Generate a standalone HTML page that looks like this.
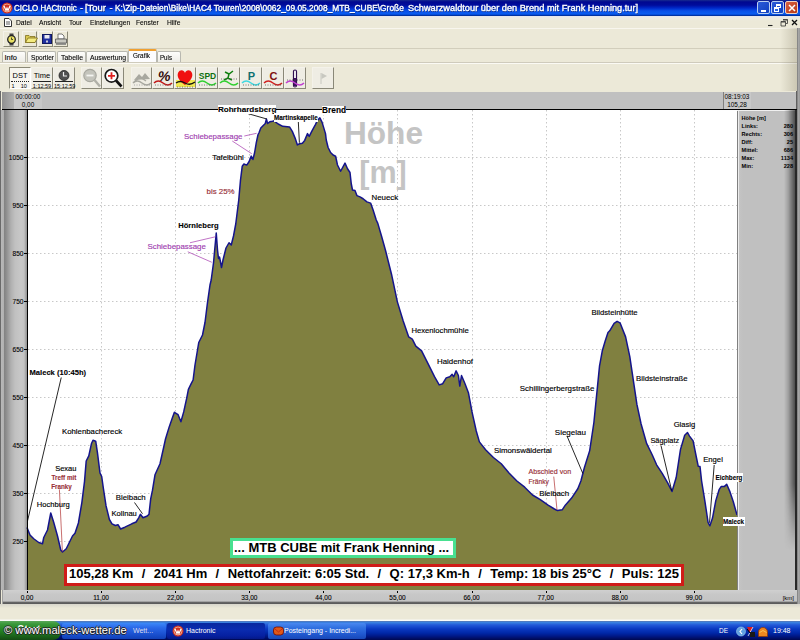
<!DOCTYPE html>
<html><head><meta charset="utf-8">
<style>
*{margin:0;padding:0;box-sizing:border-box}
html,body{width:800px;height:640px;overflow:hidden;background:#ece9d8;font-family:"Liberation Sans",sans-serif;}
.a{position:absolute}
#title{left:0;top:0;width:800px;height:16px;background:linear-gradient(#182c90 0%,#000890 12%,#000c9c 32%,#0028c8 50%,#0850e8 68%,#0a5cf0 88%,#0040c8 93%,#002888 100%);}
#title .t{top:2.7px;color:#fff;font-size:8.8px;white-space:nowrap;line-height:10px;transform-origin:0 0;-webkit-text-stroke:0.35px #fff;text-shadow:0.5px 0.5px 0 #0a1a60}
#menu{left:0;top:16px;width:800px;height:12px;background:linear-gradient(#e4e4ee,#ecebe4 15%,#ece9d8 40%,#ece9d8);font-size:7px;color:#000}
#menu span{position:absolute;top:1.5px;line-height:9px;font-size:7.8px;transform:scaleX(0.86);transform-origin:0 0;-webkit-text-stroke:0.1px #000}
#tb1{left:0;top:28px;width:800px;height:20px;background:#ece9d8;border-top:1px solid #f8f6ee}
.btn{position:absolute;border-right:1px solid #8a8876;border-bottom:1px solid #8a8876;border-left:1px solid #f4f2ea;border-top:1px solid #f4f2ea}
#tabs{left:0;top:48px;width:800px;height:15px;background:#ece9d8}
.tt{position:absolute;font-size:7.5px;line-height:9px;white-space:nowrap;transform-origin:0 0;-webkit-text-stroke:0.1px #000}
.tab{position:absolute;top:3px;height:12px;background:linear-gradient(#fdfdfb,#ecebe5);border:1px solid #b8b8b0;border-bottom:none;font-size:7.2px;text-align:center;line-height:11px;color:#000;border-radius:2px 2px 0 0}
#tb2{left:0;top:63px;width:800px;height:28px;background:#ece9d8;border-top:1px solid #fbfaf4}
#hdr{left:2px;top:92px;width:795px;height:17px;background:linear-gradient(90deg,#909090 0%,#b0b0b0 1.5%,#c0c0c0 3%,#c0c0c0 100%)}
#blk{left:2px;top:109px;width:795px;height:1px;background:#000}
#leftp{left:0px;top:110px;width:27px;height:480px;background:linear-gradient(90deg,#585858 0px,#606060 1px,#b8b8b8 1px,#b0b0b0 4px,#848484 4.5px,#8c8c8c 6px,#b0b0b0 11px,#c0c0c0 15px,#c8c8c8 21px,#c4c4c4 24px,#a0a0a0 26px,#909090 27px)}
#axis{left:26.5px;top:110px;width:1.2px;height:480px;background:#000}
#chart{left:0;top:0;width:800px;height:640px}
.yl{position:absolute;left:2px;width:21.5px;text-align:right;font-size:6.6px;color:#000;line-height:8px;-webkit-text-stroke:0.1px #000}
.ytick{position:absolute;left:24px;width:3px;height:1.3px;background:#000}
#rp{left:737px;top:110px;width:60px;height:480px;background:linear-gradient(90deg,#808080 0px,#808080 1px,#f0f0f0 1px,#e8e8e8 2px,#c4c4c4 2px,#c0c0c0 6px,#c0c0c0 100%);border-top:1px solid #f0f0f0}
#rpsh{left:784px;top:110px;width:11px;height:440px;background:linear-gradient(90deg,rgba(0,0,0,0),rgba(0,0,0,0.15) 35%,rgba(0,0,0,0.6));-webkit-mask-image:linear-gradient(#000 85%,rgba(0,0,0,0))}
#rpt{left:737px;top:110px;width:60px;height:100px}
#rpt div{position:absolute;font-size:5.6px;font-weight:bold;line-height:8px;color:#000;white-space:nowrap}
#xax{left:2px;top:590px;width:795px;height:14px;background:linear-gradient(#d0d0d0,#c8c8c8 30%,#c4c4c4 80%,#686868 86%,#585858 100%);border-left:1px solid #a0a0a0}
.xl{position:absolute;top:594px;width:40px;text-align:center;font-size:6.5px;color:#000;line-height:8px;-webkit-text-stroke:0.1px #000}
.xtick{position:absolute;top:591px;width:1px;height:2px;background:#000}
#beige{left:0;top:604px;width:800px;height:17px;background:linear-gradient(#d8d6cc,#ece9d8 25%,#ece9d8 88%,#f8f8f4 94%,#fff)}
#task{left:0;top:621px;width:800px;height:19px;background:linear-gradient(#5a78b0 0px,#3a80e0 1.5px,#2258d8 4px,#0a38c0 8px,#0028a8 12px,#001888 15px,#000850 19px)}
.lbl{position:absolute;font-size:7.8px;color:#000;white-space:nowrap;line-height:9px;-webkit-text-stroke:0.15px currentColor}
.bd{font-weight:bold;-webkit-text-stroke:0.1px currentColor}
.mag{color:#a040b0}
.red{color:#983038}
.wb{background:#fff}
</style></head><body>
<div id="title" class="a">
<svg class="a" style="left:1px;top:2px" width="12" height="12"><circle cx="6" cy="6" r="5.5" fill="#d03020"/><circle cx="6" cy="6" r="4" fill="none" stroke="#f0c0a0" stroke-width="0.8"/><path d="M3 4 L5 8.5 L6 6 L7 8.5 L9 4" stroke="#fff" stroke-width="1.2" fill="none"/></svg>
<div class="t a" style="left:13.8px;transform:scaleX(0.902)">CICLO HACtronic</div><div class="t a" style="left:80px">-</div><div class="t a" style="left:85px;transform:scaleX(1.074)">[Tour</div><div class="t a" style="left:109.5px">-</div><div class="t a" style="left:115px;transform:scaleX(0.95)">K:\Zip-Dateien\Bike\HAC4 Touren\2008\0062_09.05.2008_MTB_CUBE\Große</div><div class="t a" style="left:407.5px;transform:scaleX(1.048)">Schwarzwaldtour über den Brend mit Frank Henning.tur]</div>
<div class="a" style="left:757px;top:1px;width:13px;height:13px;border:1px solid #b8cef0;border-radius:2px;background:linear-gradient(135deg,#2a5ad8,#1040c0)"><div class="a" style="left:3px;top:8px;width:5px;height:2px;background:#fff"></div></div>
<div class="a" style="left:771px;top:1px;width:13px;height:13px;border:1px solid #b8cef0;border-radius:2px;background:linear-gradient(135deg,#2a5ad8,#1040c0)"><div class="a" style="left:4px;top:2px;width:5px;height:4px;border:1px solid #fff;border-top-width:2px"></div><div class="a" style="left:2px;top:5px;width:5px;height:5px;border:1px solid #fff;border-top-width:2px;background:#2a66e4"></div></div>
<div class="a" style="left:785px;top:1px;width:13px;height:13px;border:1px solid #f0d0c0;border-radius:2px;background:linear-gradient(135deg,#d86040,#b83818)"><svg class="a" style="left:2px;top:2px" width="8" height="8"><path d="M1 1L7 7M7 1L1 7" stroke="#fff" stroke-width="1.5"/></svg></div>
</div>
<div id="menu" class="a">
<svg class="a" style="left:4px;top:2px" width="8" height="9"><path d="M0.5 0.5H5L7.5 3V8.5H0.5Z" fill="#fff" stroke="#333" stroke-width="1"/><path d="M2 4H6M2 6H6" stroke="#333" stroke-width="0.8"/></svg>
<span style="left:15.5px">Datei</span><span style="left:38.5px">Ansicht</span><span style="left:68.5px">Tour</span><span style="left:89.5px">Einstellungen</span><span style="left:136px">Fenster</span><span style="left:167px">Hilfe</span>
<svg class="a" style="left:767px;top:3px" width="8" height="8"><path d="M1 6.5H5.5" stroke="#222" stroke-width="1.1"/></svg>
<svg class="a" style="left:779.5px;top:2.5px" width="9" height="9"><path d="M3 0.5H7.5V4.5H6M1 2.5H5.5V7H1Z" stroke="#333" stroke-width="0.8" fill="none"/><path d="M1 3H5.5M3 1H7.5" stroke="#333" stroke-width="0.9"/></svg>
<svg class="a" style="left:791px;top:2.5px" width="8" height="8"><path d="M1 1L6 6M6 1L1 6" stroke="#111" stroke-width="1.3"/></svg>
</div>
<div id="tb1" class="a">
<div class="btn" style="left:3px;top:2px;width:16px;height:16px"><svg class="a" style="left:2px;top:1px" width="11" height="13"><rect x="3.5" y="0.5" width="4" height="2.5" fill="#444"/><rect x="3.5" y="10" width="4" height="2.5" fill="#444"/><circle cx="5.5" cy="6.5" r="3.8" fill="#e8e060" stroke="#222" stroke-width="1.3"/><path d="M5.5 4.5V6.5H7" stroke="#222" stroke-width="0.8" fill="none"/></svg></div>
<div class="btn" style="left:22px;top:2px;width:15px;height:16px"><svg class="a" style="left:1.5px;top:2px" width="13" height="9"><path d="M0.5 1.5H4L5 2.5H10V8.5H0.5Z" fill="#d8c850" stroke="#807020" stroke-width="0.8"/><path d="M0.5 8.5L3 4H12.5L10 8.5Z" fill="#f4ec80" stroke="#807020" stroke-width="0.8"/></svg></div>
<div class="btn" style="left:38px;top:2px;width:15px;height:16px"><svg class="a" style="left:2.5px;top:2px" width="10" height="10"><rect x="0.5" y="0.5" width="9" height="9" fill="#2030a0" stroke="#101860"/><rect x="2.5" y="1" width="5" height="3.5" fill="#e8e8f0"/><rect x="4" y="6.5" width="2" height="2" fill="#c8c8d8"/></svg></div>
<div class="btn" style="left:53px;top:2px;width:15px;height:16px"><svg class="a" style="left:1px;top:1px" width="12" height="13"><path d="M3 1H7L9 3V6H3Z" fill="#fff" stroke="#555" stroke-width="0.8"/><path d="M0.5 6H11.5V10H0.5Z" fill="#c8c8c0" stroke="#555" stroke-width="0.8"/><path d="M1 11H11" stroke="#777" stroke-width="1.5"/></svg></div>
</div>
<div id="tabs" class="a">
<div class="tab" style="left:2px;width:24px"></div>
<div class="tab" style="left:27px;width:29px"></div>
<div class="tab" style="left:57px;width:29px"></div>
<div class="tab" style="left:86px;width:42px"></div>
<div class="tab" style="left:128px;top:1px;height:15px;width:29px;background:#fcfcfe;border-top:2px solid #f0a030"></div>
<div class="tab" style="left:157px;width:24px"></div>
<span class="tt" style="left:4.5px;top:4.5px;transform:scaleX(1)">Info</span>
<span class="tt" style="left:31px;top:4.5px;transform:scaleX(0.875)">Sportler</span>
<span class="tt" style="left:61px;top:4.5px;transform:scaleX(0.925)">Tabelle</span>
<span class="tt" style="left:90px;top:4.5px;transform:scaleX(0.91)">Auswertung</span>
<span class="tt" style="left:133px;top:3px;transform:scaleX(0.85)">Grafik</span>
<span class="tt" style="left:160px;top:4.5px;transform:scaleX(0.82)">Puls</span>
</div>
<div class="a" style="left:0;top:48px;width:800px;height:1px;background:#d2cebc"></div>
<div class="a" style="left:0;top:62px;width:800px;height:1px;background:#cfcbbc"></div>
<div id="tb2" class="a">
<div class="a" style="left:9px;top:3px;width:22px;height:22px;border-left:1px solid #8a8876;border-top:1px solid #8a8876;border-right:1px solid #fff;border-bottom:1px solid #fff;background:#f6f5ef"><div class="a" style="left:0;top:2.5px;width:20px;text-align:center;font-size:7.5px;line-height:9px">DST</div><div class="a" style="left:1px;top:12.5px;width:18px;height:1px;border-top:1px dotted #222"></div><div class="a" style="left:0;top:15px;width:20px;font-size:5.5px;line-height:7px;white-space:pre"> 1    10</div></div>
<div class="a" style="left:31px;top:3px;width:22px;height:22px;border-left:1px solid #f4f2ea;border-top:1px solid #f4f2ea;border-right:1px solid #8a8878;border-bottom:1px solid #8a8878;background:#efede4"><div class="a" style="left:0;top:2.5px;width:20px;text-align:center;font-size:7.5px;line-height:9px">Time</div><div class="a" style="left:1px;top:12.5px;width:18px;height:1px;background:#222"></div><div class="a" style="left:0;top:14.5px;width:20px;text-align:center;font-size:5.5px;line-height:7px">1:12:59</div></div>
<div class="a" style="left:53px;top:3px;width:22px;height:22px;border-left:1px solid #f4f2ea;border-top:1px solid #f4f2ea;border-right:1px solid #8a8878;border-bottom:1px solid #8a8878;background:#efede4"><svg class="a" style="left:4px;top:1.5px" width="12" height="11"><circle cx="6" cy="5.5" r="5" fill="#505050" stroke="#222" stroke-width="0.8"/><path d="M5.5 2V6H9" stroke="#eee" stroke-width="1.2" fill="none"/></svg><div class="a" style="left:1px;top:12.5px;width:18px;height:1px;background:#222"></div><div class="a" style="left:0;top:14.5px;width:20px;text-align:center;font-size:5.5px;line-height:7px">15:12:59</div></div>
<div class="a" style="left:81px;top:3px;width:21px;height:22px;border-left:1px solid #f4f2ea;border-top:1px solid #f4f2ea;border-right:1px solid #8a8878;border-bottom:1px solid #8a8878;background:#efede4"><svg class="a" style="left:0;top:0" width="20" height="21"><circle cx="8" cy="7.5" r="6.2" fill="#c4c4bc" stroke="#a8a8a0" stroke-width="1.2"/><path d="M4.5 7.5H11.5" stroke="#f4f4f0" stroke-width="1.8"/><path d="M12.5 12L18 18.5" stroke="#b0b0a8" stroke-width="2.4"/></svg></div>
<div class="a" style="left:102px;top:3px;width:22px;height:22px;border-left:1px solid #f4f2ea;border-top:1px solid #f4f2ea;border-right:1px solid #8a8878;border-bottom:1px solid #8a8878;background:#efede4"><svg class="a" style="left:0;top:0" width="21" height="21"><circle cx="8.5" cy="7.8" r="6.3" fill="#fff" stroke="#181818" stroke-width="1.7"/><path d="M5 7.8H12M8.5 4.3V11.3" stroke="#e02020" stroke-width="1.8"/><path d="M13 12.5L18.5 18.5" stroke="#111" stroke-width="2.6"/></svg></div>
<div class="a" style="left:131px;top:3px;width:21px;height:22px;border-left:1px solid #f4f2ea;border-top:1px solid #f4f2ea;border-right:1px solid #8a8878;border-bottom:1px solid #8a8878;background:#efede4"><svg class="a" style="left:0;top:0" width="20" height="21"><path d="M2 12L7 6L10 9L13 5L18 11Z" fill="#a8a8a0"/><path d="M2 14L8 9L14 13" stroke="#a8a8a0" stroke-width="1.5" fill="none"/><path d="M1 15Q5 11 10 15T19 15" stroke="#a8a8a0" stroke-width="1.5" fill="none"/><path d="M2 17H19" stroke="#999" stroke-width="0.8" stroke-dasharray="1 1.5"/></svg></div>
<div class="a" style="left:152px;top:3px;width:22px;height:22px;border-left:1px solid #f4f2ea;border-top:1px solid #f4f2ea;border-right:1px solid #8a8878;border-bottom:1px solid #8a8878;background:#efede4"><svg class="a" style="left:0;top:0" width="21" height="21"><text x="10.5" y="13" font-family="Liberation Sans" font-weight="bold" font-size="14" fill="#300808" text-anchor="middle" transform="skewX(-8) translate(2,0)">%</text><path d="M1 15Q5 11 10 15T19 15" stroke="#c01818" stroke-width="1.5" fill="none"/><path d="M2 17H19" stroke="#666" stroke-width="0.8" stroke-dasharray="1 1.5"/></svg></div>
<div class="a" style="left:174px;top:3px;width:22px;height:22px;border-left:1px solid #f4f2ea;border-top:1px solid #f4f2ea;border-right:1px solid #8a8878;border-bottom:1px solid #8a8878;background:#efede4"><svg class="a" style="left:0;top:0" width="21" height="21"><rect x="1" y="12" width="19" height="7" fill="#f0e850"/><path d="M10 17C3 12 2 8 3 5C5 1 9 2 10 5C11 2 15 1 17 5C18 8 17 12 10 17Z" fill="#f01010"/><path d="M1 15Q5 12 10 15T20 14" stroke="#111" stroke-width="1.3" fill="none"/><path d="M2 19H19" stroke="#555" stroke-width="0.8" stroke-dasharray="1 1.5"/></svg></div>
<div class="a" style="left:196px;top:3px;width:22px;height:22px;border-left:1px solid #f4f2ea;border-top:1px solid #f4f2ea;border-right:1px solid #8a8878;border-bottom:1px solid #8a8878;background:#efede4"><svg class="a" style="left:0;top:0" width="21" height="21"><text x="10.5" y="10.5" font-family="Liberation Sans" font-weight="bold" font-size="8.5" fill="#107010" text-anchor="middle">SPD</text><path d="M1 15Q5 11 10 15T19 15" stroke="#30d030" stroke-width="1.5" fill="none"/><path d="M2 17H19" stroke="#555" stroke-width="0.8" stroke-dasharray="1 1.5"/></svg></div>
<div class="a" style="left:218px;top:3px;width:22px;height:22px;border-left:1px solid #f4f2ea;border-top:1px solid #f4f2ea;border-right:1px solid #8a8878;border-bottom:1px solid #8a8878;background:#efede4"><svg class="a" style="left:0;top:0" width="21" height="21"><path d="M6 4L10 6L14 3M10 6L9 10L13 12M9 10L5 12" stroke="#108010" stroke-width="1.5" fill="none"/><path d="M1 15Q5 11 10 15T19 15" stroke="#30d030" stroke-width="1.5" fill="none"/><path d="M2 11H19" stroke="#555" stroke-width="0.8" stroke-dasharray="1 1.5"/></svg></div>
<div class="a" style="left:240px;top:3px;width:22px;height:22px;border-left:1px solid #f4f2ea;border-top:1px solid #f4f2ea;border-right:1px solid #8a8878;border-bottom:1px solid #8a8878;background:#efede4"><svg class="a" style="left:0;top:0" width="21" height="21"><text x="10.5" y="11.5" font-family="Liberation Sans" font-weight="bold" font-size="11" fill="#107070" text-anchor="middle">P</text><path d="M1 15Q5 11 10 15T19 15" stroke="#40d8e0" stroke-width="1.5" fill="none"/><path d="M2 17H19" stroke="#555" stroke-width="0.8" stroke-dasharray="1 1.5"/></svg></div>
<div class="a" style="left:262px;top:3px;width:22px;height:22px;border-left:1px solid #f4f2ea;border-top:1px solid #f4f2ea;border-right:1px solid #8a8878;border-bottom:1px solid #8a8878;background:#efede4"><svg class="a" style="left:0;top:0" width="21" height="21"><text x="10.5" y="11.5" font-family="Liberation Sans" font-weight="bold" font-size="11" fill="#801010" text-anchor="middle">C</text><path d="M1 15Q5 11 10 15T19 15" stroke="#d02020" stroke-width="1.5" fill="none"/><path d="M2 17H19" stroke="#555" stroke-width="0.8" stroke-dasharray="1 1.5"/></svg></div>
<div class="a" style="left:284px;top:3px;width:22px;height:22px;border-left:1px solid #f4f2ea;border-top:1px solid #f4f2ea;border-right:1px solid #8a8878;border-bottom:1px solid #8a8878;background:#efede4"><svg class="a" style="left:0;top:0" width="21" height="21"><rect x="8.5" y="2" width="3" height="17" rx="1.5" fill="#fff" stroke="#301050" stroke-width="1.2"/><rect x="9" y="10" width="2" height="8" fill="#401060"/><path d="M1 15Q5 11 10 15T19 15" stroke="#c040d0" stroke-width="1.5" fill="none"/><path d="M2 12H19" stroke="#555" stroke-width="0.8" stroke-dasharray="1 1.5"/></svg></div>
<div class="a" style="left:312px;top:3px;width:22px;height:22px;border-left:1px solid #f4f2ea;border-top:1px solid #f4f2ea;border-right:1px solid #8a8878;border-bottom:1px solid #8a8878;background:#efede4"><svg class="a" style="left:0;top:0" width="21" height="21"><path d="M8 5V16" stroke="#c8c8c0" stroke-width="1"/><path d="M8.5 5L14 8L8.5 11Z" fill="#c8c8c0"/></svg></div>
</div>
<div class="a" style="left:780px;top:28px;width:20px;height:63px;background:linear-gradient(90deg,rgba(0,0,0,0),rgba(60,50,20,0.22))"></div>
<div id="hdr" class="a"></div>
<div class="a" style="left:14px;top:92px;width:28px;height:17px;background:#c8c8c8"></div>
<div class="a" style="left:724px;top:92px;width:27px;height:17px;background:#c8c8c8"></div><div class="a" style="left:723px;top:92px;width:1px;height:17px;background:#808080"></div>
<div class="a" style="left:796px;top:91px;width:1px;height:19px;background:#606060"></div>
<div class="a" style="left:10px;top:93px;width:36px;text-align:center;font-size:6.4px;line-height:8px">00:00:00<br>0,00</div>
<div class="a" style="left:719px;top:93px;width:36px;text-align:center;font-size:6.4px;line-height:8px">08:19:03<br>105,28</div>
<div id="blk" class="a"></div>
<div id="leftp" class="a"></div>
<div class="a" style="left:0;top:91px;width:1px;height:513px;background:#6a6a6a"></div>
<svg id="chart" class="a" width="800" height="640">
<rect x="28" y="110" width="709" height="480" fill="#fff"/>
<text x="383.5" y="143.5" font-family="Liberation Sans" font-weight="bold" font-size="30.5" fill="#c4c4c4" text-anchor="middle" textLength="79" lengthAdjust="spacingAndGlyphs">Höhe</text>
<text x="383" y="183" font-family="Liberation Sans" font-weight="bold" font-size="31" fill="#c4c4c4" text-anchor="middle" textLength="47.5" lengthAdjust="spacingAndGlyphs">[m]</text>
<g stroke="#c8c8c8" stroke-width="1" stroke-dasharray="1.5 2.5">
<line x1="28" y1="541.5" x2="737" y2="541.5"/>
<line x1="28" y1="493.5" x2="737" y2="493.5"/>
<line x1="28" y1="445.5" x2="737" y2="445.5"/>
<line x1="28" y1="397.5" x2="737" y2="397.5"/>
<line x1="28" y1="349.5" x2="737" y2="349.5"/>
<line x1="28" y1="301.5" x2="737" y2="301.5"/>
<line x1="28" y1="253.5" x2="737" y2="253.5"/>
<line x1="28" y1="205.5" x2="737" y2="205.5"/>
<line x1="28" y1="157.5" x2="737" y2="157.5"/>
<line x1="101.5" y1="110" x2="101.5" y2="590"/>
<line x1="175.5" y1="110" x2="175.5" y2="590"/>
<line x1="249.5" y1="110" x2="249.5" y2="590"/>
<line x1="323.5" y1="110" x2="323.5" y2="590"/>
<line x1="397.5" y1="110" x2="397.5" y2="590"/>
<line x1="472.5" y1="110" x2="472.5" y2="590"/>
<line x1="546.5" y1="110" x2="546.5" y2="590"/>
<line x1="620.5" y1="110" x2="620.5" y2="590"/>
<line x1="694.5" y1="110" x2="694.5" y2="590"/>
</g>
<polygon points="27,590 27,527.5 30,535 33.75,538.75 38.75,542.5 42.5,543.75 43.75,537.5 47.5,530 50.75,513 53.75,522.5 57.5,536 60.75,550 62.5,552 66.25,548.75 72.5,536 75,533.3 78.4,523 81.9,502.3 84.5,481.6 86.2,461 88.8,455.8 91.4,443.8 93,440.3 95.7,441.2 97.4,452.4 100,473 101.7,476.5 103.4,488.5 106,505.7 109.4,519.5 112,523.8 115.4,525.5 118,524.7 120.6,529 124.9,527.2 131.8,523.8 136.1,522 138.7,517.8 140.4,514.3 143,517.8 147.3,516 149,514.3 150.7,498.8 152.5,490.2 155,474.8 160,463.75 163.75,447 165.5,439 169.2,426.9 172.5,417.5 174.4,412.3 178.1,414.7 180.9,421.7 183.7,411.9 186.6,398.7 188.4,389.4 191.2,383.7 193.1,380 195,365 198.75,342.5 202.5,335 205,322.5 207.5,302.5 210,285 211.2,280 213.5,263 216.25,233 217.5,250 218.5,258.5 219.5,257 220.3,261 221.5,267.5 223,260 226,248 229,242.75 231.25,245 233.5,236 235.75,224 237.25,212 238.75,200 240.5,180 242.25,166.2 243.9,164 246.75,165.1 249,161.75 251.25,156.1 252.9,159.5 254.6,152.75 256.3,142.6 258,134.75 259.1,132.5 260.8,128 263,125.75 265.3,123.5 266.4,119 267.6,123.5 269.8,121.8 272.6,121.25 274.3,120.7 276,122.4 278.25,124 282.75,126.3 289.5,126.9 292.3,131.4 295.1,138.1 297.4,144.9 299.6,143.75 302.4,143.2 304.7,140.4 307.5,133.6 309.2,136.4 312,130.8 315.4,124.6 317.6,120.1 319.9,117.9 322.1,122.4 325.5,133.6 326.25,140 328.1,147.5 330.6,152.5 333.1,155 335.6,156.25 337.5,165 340.6,171.25 345,163.1 347.5,168.75 350,172.5 351.25,183.75 352.5,190 355,190.6 356.9,195.6 360,196.9 363.1,198.75 366.9,201.9 370.6,203.1 373.1,210 376.25,220 377.8,223.4 381.5,236 385.6,250.8 391.5,274.2 397.3,301.6 403.2,321 408.7,336.9 412.3,339.2 415.8,346.2 421.6,350.9 427.5,362.7 434.5,376.7 439.2,384.9 442.7,383.7 446.2,377.9 449.8,376.7 452.1,374.4 453.7,376.7 456.1,370.9 458.4,375.5 459.8,386.1 461.5,375.5 465,383.7 468.5,393.1 472,411.9 476.25,431 479.4,441.9 485.6,449.7 493.4,457.5 501.25,463.75 509,473 516.9,481 524.7,487.2 532.5,495 540.3,499.7 548.1,505.2 554.4,509 557.5,510.6 562.2,509.8 565.3,505.2 571.6,498.1 577.8,488.75 580.9,481 584.5,467.3 589.7,450.6 593.9,422.5 596.7,394.4 599.5,366.2 602.3,350.8 605.2,341 608,332.5 609.7,330.8 614.1,323.4 617.1,321.3 620,322.8 625.6,336.9 629.8,356.6 632.7,376.2 636.9,404.4 641.1,424 646.7,443.7 652.3,455 656.6,464.8 662.2,473.3 667.8,483.1 672,491.5 676.2,477.5 680.5,449.4 684.7,435.3 687.5,432.5 689.5,436.1 693.1,440.9 695.9,455 698.2,466.2 700,466.5 701.6,481 704.8,500.6 708.1,522.5 709.9,525.8 712.5,518.1 715.8,500.6 719.1,489.7 721.3,486.4 724.5,486.4 726.7,484.2 730,491.9 733.3,501.7 737,515 737,590" fill="#808040"/>
<polyline points="27,527.5 30,535 33.75,538.75 38.75,542.5 42.5,543.75 43.75,537.5 47.5,530 50.75,513 53.75,522.5 57.5,536 60.75,550 62.5,552 66.25,548.75 72.5,536 75,533.3 78.4,523 81.9,502.3 84.5,481.6 86.2,461 88.8,455.8 91.4,443.8 93,440.3 95.7,441.2 97.4,452.4 100,473 101.7,476.5 103.4,488.5 106,505.7 109.4,519.5 112,523.8 115.4,525.5 118,524.7 120.6,529 124.9,527.2 131.8,523.8 136.1,522 138.7,517.8 140.4,514.3 143,517.8 147.3,516 149,514.3 150.7,498.8 152.5,490.2 155,474.8 160,463.75 163.75,447 165.5,439 169.2,426.9 172.5,417.5 174.4,412.3 178.1,414.7 180.9,421.7 183.7,411.9 186.6,398.7 188.4,389.4 191.2,383.7 193.1,380 195,365 198.75,342.5 202.5,335 205,322.5 207.5,302.5 210,285 211.2,280 213.5,263 216.25,233 217.5,250 218.5,258.5 219.5,257 220.3,261 221.5,267.5 223,260 226,248 229,242.75 231.25,245 233.5,236 235.75,224 237.25,212 238.75,200 240.5,180 242.25,166.2 243.9,164 246.75,165.1 249,161.75 251.25,156.1 252.9,159.5 254.6,152.75 256.3,142.6 258,134.75 259.1,132.5 260.8,128 263,125.75 265.3,123.5 266.4,119 267.6,123.5 269.8,121.8 272.6,121.25 274.3,120.7 276,122.4 278.25,124 282.75,126.3 289.5,126.9 292.3,131.4 295.1,138.1 297.4,144.9 299.6,143.75 302.4,143.2 304.7,140.4 307.5,133.6 309.2,136.4 312,130.8 315.4,124.6 317.6,120.1 319.9,117.9 322.1,122.4 325.5,133.6 326.25,140 328.1,147.5 330.6,152.5 333.1,155 335.6,156.25 337.5,165 340.6,171.25 345,163.1 347.5,168.75 350,172.5 351.25,183.75 352.5,190 355,190.6 356.9,195.6 360,196.9 363.1,198.75 366.9,201.9 370.6,203.1 373.1,210 376.25,220 377.8,223.4 381.5,236 385.6,250.8 391.5,274.2 397.3,301.6 403.2,321 408.7,336.9 412.3,339.2 415.8,346.2 421.6,350.9 427.5,362.7 434.5,376.7 439.2,384.9 442.7,383.7 446.2,377.9 449.8,376.7 452.1,374.4 453.7,376.7 456.1,370.9 458.4,375.5 459.8,386.1 461.5,375.5 465,383.7 468.5,393.1 472,411.9 476.25,431 479.4,441.9 485.6,449.7 493.4,457.5 501.25,463.75 509,473 516.9,481 524.7,487.2 532.5,495 540.3,499.7 548.1,505.2 554.4,509 557.5,510.6 562.2,509.8 565.3,505.2 571.6,498.1 577.8,488.75 580.9,481 584.5,467.3 589.7,450.6 593.9,422.5 596.7,394.4 599.5,366.2 602.3,350.8 605.2,341 608,332.5 609.7,330.8 614.1,323.4 617.1,321.3 620,322.8 625.6,336.9 629.8,356.6 632.7,376.2 636.9,404.4 641.1,424 646.7,443.7 652.3,455 656.6,464.8 662.2,473.3 667.8,483.1 672,491.5 676.2,477.5 680.5,449.4 684.7,435.3 687.5,432.5 689.5,436.1 693.1,440.9 695.9,455 698.2,466.2 700,466.5 701.6,481 704.8,500.6 708.1,522.5 709.9,525.8 712.5,518.1 715.8,500.6 719.1,489.7 721.3,486.4 724.5,486.4 726.7,484.2 730,491.9 733.3,501.7 737,515" fill="none" stroke="#14148c" stroke-width="1.5" stroke-linejoin="round"/>
<g stroke="#000" stroke-width="0.85" fill="none">
<path d="M61.25 377.5L27.5 521"/>
<path d="M134.5 502.5L142.5 513.75"/>
<path d="M247.6 113.5L266.8 119"/>
<path d="M298.3 121.4L299.4 142.75"/>
<path d="M567 436L582.8 473.4"/>
<path d="M661 445.7L671.7 490.6"/>
<path d="M714.2 465L709.5 522.8"/>
</g>
<g stroke="#b03030" stroke-width="0.7" fill="none">
<path d="M59.4 489.4L62.4 551.7"/>
<path d="M553.75 476.6L557 510"/>
</g>
<g stroke="#b050b8" stroke-width="0.8" fill="none">
<path d="M190 242.75L215.5 236.75"/>
<path d="M187.75 251.75L211.75 262.25"/>
<path d="M244.3 136L256.6 133.3"/>
<path d="M232.25 141L251.75 153.75"/>
</g>
</svg>
<div id="axis" class="a"></div>
<div class="yl" style="top:537.9px">250</div><div class="ytick" style="top:540.9px"></div>
<div class="yl" style="top:489.9px">350</div><div class="ytick" style="top:492.9px"></div>
<div class="yl" style="top:441.9px">450</div><div class="ytick" style="top:444.9px"></div>
<div class="yl" style="top:393.9px">550</div><div class="ytick" style="top:396.9px"></div>
<div class="yl" style="top:345.9px">650</div><div class="ytick" style="top:348.9px"></div>
<div class="yl" style="top:297.9px">750</div><div class="ytick" style="top:300.9px"></div>
<div class="yl" style="top:249.9px">850</div><div class="ytick" style="top:252.9px"></div>
<div class="yl" style="top:201.9px">950</div><div class="ytick" style="top:204.9px"></div>
<div class="yl" style="top:153.9px">1050</div><div class="ytick" style="top:156.9px"></div>
<div class="lbl bd wb" style="left:217.9px;top:105.4px;font-size:8.1px">Rohrhardsberg</div>
<div class="lbl bd wb" style="left:322.1px;top:105.8px;font-size:8.3px">Brend</div>
<div class="lbl wb bd" style="left:274.1px;top:112.9px;font-size:6.3px">Martinskapelle</div>
<div class="lbl mag" style="left:184.1px;top:131.6px;font-size:7.9px">Schiebepassage</div>
<div class="lbl " style="left:212.2px;top:153.0px;font-size:7.9px">Tafelbühl</div>
<div class="lbl red" style="left:206.5px;top:186.7px;font-size:7.9px">bis 25%</div>
<div class="lbl bd" style="left:178.2px;top:221.1px;font-size:7.6px">Hörnleberg</div>
<div class="lbl mag" style="left:147.5px;top:242.4px;font-size:7.9px">Schiebepassage</div>
<div class="lbl " style="left:371.5px;top:192.6px;font-size:7.9px">Neueck</div>
<div class="lbl bd" style="left:29.5px;top:367.6px;font-size:7.6px">Maleck (10:45h)</div>
<div class="lbl " style="left:62.0px;top:427.4px;font-size:7.8px">Kohlenbachereck</div>
<div class="lbl " style="left:55.2px;top:463.7px;font-size:7.5px">Sexau</div>
<div class="lbl red bd" style="left:51.5px;top:473.1px;font-size:6.3px">Treff mit</div>
<div class="lbl red bd" style="left:51.2px;top:481.7px;font-size:6.3px">Franky</div>
<div class="lbl " style="left:36.8px;top:499.8px;font-size:7.6px">Hochburg</div>
<div class="lbl " style="left:115.8px;top:492.6px;font-size:7.8px">Bleibach</div>
<div class="lbl " style="left:111.5px;top:508.6px;font-size:7.6px">Kollnau</div>
<div class="lbl " style="left:411.4px;top:325.9px;font-size:7.7px">Hexenlochmühle</div>
<div class="lbl " style="left:437.0px;top:356.6px;font-size:7.9px">Haidenhof</div>
<div class="lbl " style="left:519.8px;top:384.0px;font-size:7.9px">Schillingerbergstraße</div>
<div class="lbl " style="left:554.8px;top:427.5px;font-size:8px">Siegelau</div>
<div class="lbl " style="left:493.9px;top:445.6px;font-size:7.9px">Simonswäldertal</div>
<div class="lbl red" style="left:528.5px;top:468.2px;font-size:7.1px">Abschied von</div>
<div class="lbl red" style="left:528.5px;top:476.9px;font-size:6.7px">Fränky</div>
<div class="lbl " style="left:539.2px;top:488.6px;font-size:7.8px">Bleibach</div>
<div class="lbl " style="left:591.4px;top:307.5px;font-size:7.7px">Bildsteinhütte</div>
<div class="lbl " style="left:636.0px;top:373.6px;font-size:7.8px">Bildsteinstraße</div>
<div class="lbl " style="left:650.4px;top:435.9px;font-size:7.4px">Sägplatz</div>
<div class="lbl " style="left:673.7px;top:420.4px;font-size:7.6px">Glasig</div>
<div class="lbl " style="left:703.2px;top:455.1px;font-size:7.7px">Engel</div>
<div id="rp" class="a"></div><div id="rpsh" class="a"></div><div class="a" style="left:795px;top:110px;width:2px;height:480px;background:#282828"></div><div class="a" style="left:797px;top:28px;width:3px;height:577px;background:linear-gradient(90deg,#707070,#a8a8a8 40%,#989898)"></div>
<div id="rpt" class="a">
<div style="left:4.5px;top:4px">Höhe [m]</div>
<div style="left:4.5px;top:12px">Links:</div><div style="right:4px;top:12px">280</div>
<div style="left:4.5px;top:20px">Rechts:</div><div style="right:4px;top:20px">306</div>
<div style="left:4.5px;top:28px">Diff:</div><div style="right:4px;top:28px">25</div>
<div style="left:4.5px;top:36px">Mittel:</div><div style="right:4px;top:36px">686</div>
<div style="left:4.5px;top:44px">Max:</div><div style="right:4px;top:44px">1134</div>
<div style="left:4.5px;top:52px">Min:</div><div style="right:4px;top:52px">228</div>
</div>
<div class="a lbl wb bd" style="left:715px;top:473px;font-size:6.3px;padding:0 0.5px">Eichberg</div>
<div class="a lbl wb bd" style="left:722.5px;top:517px;font-size:6.3px;padding:0 0.5px">Maleck</div>
<div class="a" style="left:230px;top:538px;width:226px;height:20px;border:3px solid #48e090;background:#fff"></div>
<div class="a" style="left:234px;top:540px;font-size:13px;font-weight:bold;line-height:16px;white-space:nowrap">... MTB CUBE mit Frank Henning ...</div>
<div class="a" style="left:64px;top:564px;width:620px;height:21.5px;border:3px solid #d01c18;background:#fff"></div>
<div class="a" style="left:69px;top:566px;font-size:13px;font-weight:bold;line-height:16px;white-space:nowrap">105,28 Km<span style="margin:0 8.4px">/</span>2041 Hm<span style="margin:0 8.4px">/</span>Nettofahrzeit: 6:05 Std.<span style="margin:0 8.4px">/</span>Q: 17,3 Km-h<span style="margin:0 8.4px">/</span>Temp: 18 bis 25°C<span style="margin:0 8.4px">/</span>Puls: 125</div>
<div id="xax" class="a"></div>
<div class="xl" style="left:7.0px">0,00</div><div class="xtick" style="left:27px"></div>
<div class="xl" style="left:81.1px">11,00</div><div class="xtick" style="left:101px"></div>
<div class="xl" style="left:155.2px">22,00</div><div class="xtick" style="left:175px"></div>
<div class="xl" style="left:229.3px">33,00</div><div class="xtick" style="left:249px"></div>
<div class="xl" style="left:303.4px">44,00</div><div class="xtick" style="left:323px"></div>
<div class="xl" style="left:377.5px">55,00</div><div class="xtick" style="left:397px"></div>
<div class="xl" style="left:451.6px">66,00</div><div class="xtick" style="left:472px"></div>
<div class="xl" style="left:525.7px">77,00</div><div class="xtick" style="left:546px"></div>
<div class="xl" style="left:599.8px">88,00</div><div class="xtick" style="left:620px"></div>
<div class="xl" style="left:673.9px">99,00</div><div class="xtick" style="left:694px"></div>
<div class="a" style="left:772px;top:594px;width:22px;text-align:right;font-size:6px;line-height:8px">[km]</div>
<div id="beige" class="a"></div>
<div id="task" class="a">
<div class="a" style="left:0;top:0;width:61px;height:19px;background:linear-gradient(#5aa85a 0px,#3a983a 3px,#288828 8px,#1e701e 13px,#144a14 19px);border-radius:0 8px 8px 0"></div>
<div class="a" style="left:17px;top:3px;font-size:10px;font-style:italic;font-weight:bold;color:#fff;line-height:12px;text-shadow:1px 1px 1px #104010">Start</div>
<div class="a" style="left:62px;top:2px;width:104px;height:16px;background:linear-gradient(#3c88f8,#2a68e8 30%,#1a50d0 70%,#1040b8);border-radius:2px"></div>
<div class="a" style="left:167px;top:2px;width:98px;height:16px;background:linear-gradient(#0828a0,#0a2cb0 40%,#0620a0 80%,#041888);border-radius:2px"></div>
<svg class="a" style="left:172px;top:4px" width="12" height="12"><circle cx="6" cy="6" r="5.5" fill="#d03020"/><circle cx="6" cy="6" r="4" fill="none" stroke="#f0c0a0" stroke-width="0.8"/><path d="M3 4 L5 8.5 L6 6 L7 8.5 L9 4" stroke="#fff" stroke-width="1.2" fill="none"/></svg>
<div class="a" style="left:186px;top:5px;font-size:7px;color:#fff;line-height:9px">Hactronic</div>
<div class="a" style="left:268px;top:2px;width:98px;height:16px;background:linear-gradient(#4a88f0,#3070e0 30%,#2058d0 70%,#1848b8);border-radius:2px"></div>
<svg class="a" style="left:273px;top:4.5px" width="11" height="10"><rect x="0.5" y="1" width="10" height="8" rx="3" fill="#e05818" stroke="#700800" stroke-width="0.8"/><path d="M2 3L5.5 6L9 3" stroke="#c02010" stroke-width="0.8" fill="none"/></svg>
<div class="a" style="left:284px;top:5px;font-size:7px;color:#fff;line-height:9px">Posteingang - Incredi...</div>
<div class="a" style="left:133px;top:5px;font-size:7px;color:#dde;line-height:9px">Wett...</div>
<div class="a" style="left:4px;top:3px;font-size:11.2px;color:#fff;line-height:13px;white-space:nowrap;text-shadow:-1px 0 #222,1px 0 #222,0 -1px #222,0 1px #222">© www.maleck-wetter.de</div>

<div class="a" style="left:719px;top:6px;font-size:6.5px;color:#fff;line-height:8px">DE</div>
<svg class="a" style="left:736px;top:3.5px" width="36" height="13"><circle cx="5" cy="6.5" r="4.5" fill="#60a0e0" stroke="#a0d0f0" stroke-width="0.6"/><path d="M6 4L4 6.5L6 9" stroke="#fff" stroke-width="1.2" fill="none"/><path d="M11 2H17L14 8Z" fill="#e01818"/><path d="M17 2L12 11" stroke="#f0f0f0" stroke-width="0.8"/><rect x="14" y="7" width="5" height="5" fill="#181818"/><path d="M11 4L14 8" stroke="#000" stroke-width="1"/><path d="M22.5 11.5V7A4.5 4.5 0 0 1 31.5 7V11.5Z" fill="#f08820" stroke="#903808" stroke-width="0.8"/><path d="M23.5 7.5L27 5.5L30.5 7.5" stroke="#ffd060" stroke-width="0.8" fill="none"/></svg>
<div class="a" style="left:773px;top:5px;font-size:7px;color:#fff;line-height:9px">19:48</div>

</div>
</body></html>
